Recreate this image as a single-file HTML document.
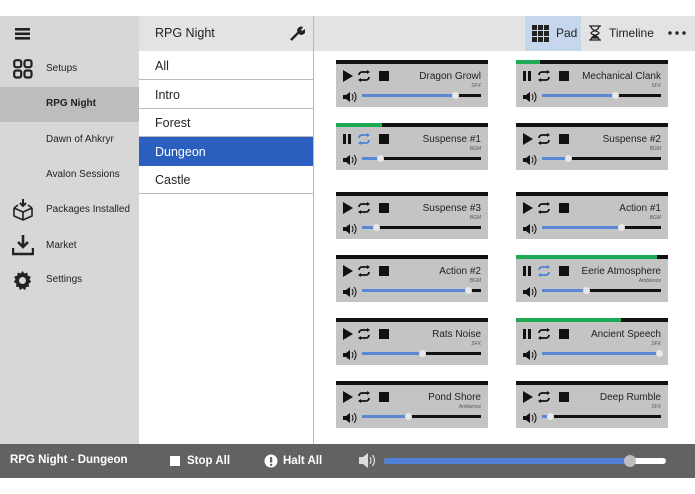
<!DOCTYPE html>
<html><head><meta charset="utf-8"><style>
*{margin:0;padding:0;box-sizing:border-box}
body{width:695px;height:494px;background:#fff;position:relative;overflow:hidden;font-family:"Liberation Sans",sans-serif;color:#222}
.a{position:absolute}
.side{left:0;top:16px;width:139px;height:428px;background:#d7d7d7}
.si{position:absolute;left:46px;font-size:10px;color:#222}
.mid{left:139px;top:16px;width:175px;height:428px;background:#fff;border-right:1px solid #bbb}
.mh{left:139px;top:16px;width:174px;height:35px;background:#e3e3e3}
.li{position:absolute;left:139px;width:174px;height:29px;border-bottom:1px solid #bbb;font-size:12.5px;padding:8px 0 0 16px}
.rh{left:314px;top:16px;width:381px;height:35px;background:#e3e3e3}
.card{position:absolute;width:152px;height:47px;background:#c4c4c4;border-top:4px solid #111}
.pg{position:absolute;top:-4px;left:0;height:4px;background:#1daa55}
.t{position:absolute;right:7px;top:7px;font-size:10px;color:#222;white-space:nowrap}
.s{position:absolute;right:7px;top:19px;font-size:5px;font-style:italic;color:#555}
.ic{position:absolute;left:6px;top:5px}
.vol{position:absolute;left:7px;top:28px}
.tr{position:absolute;left:26px;top:30px;width:119px;height:3px;background:#111}
.fl{position:absolute;left:0;top:0;height:3px;background:#5b87d6}
.th{position:absolute;top:-2px;width:7px;height:7px;border-radius:50%;background:#e8e8e8;margin-left:-3px}
.bb{left:0;top:444px;width:695px;height:34px;background:#626262;color:#fff;font-weight:bold;font-size:11.5px}
</style></head><body>
<div class="a side"></div>
<div class="a" style="left:0;top:87px;width:139px;height:35px;background:#bdbdbd"></div>
<svg class="a" style="left:15px;top:27px" width="15" height="13"><rect y="1" width="15" height="2.6" fill="#222"/><rect y="5.5" width="15" height="2.6" fill="#222"/><rect y="10" width="15" height="2.6" fill="#222"/></svg>
<svg class="a" style="left:13px;top:59px" width="20" height="20" fill="none" stroke="#222" stroke-width="2.2"><rect x="1.2" y="1.2" width="7" height="7" rx="2"/><rect x="11.5" y="1.2" width="7" height="7" rx="2"/><rect x="1.2" y="11.5" width="7" height="7" rx="2"/><rect x="11.5" y="11.5" width="7" height="7" rx="2"/></svg>
<div class="si" style="top:63px">Setups</div>
<div class="si" style="top:98px;font-weight:bold">RPG Night</div>
<div class="si" style="top:134px">Dawn of Ahkryr</div>
<div class="si" style="top:169px">Avalon Sessions</div>
<svg class="a" style="left:12px;top:198px" width="22" height="24" fill="none" stroke="#222" stroke-width="1.6"><path d="M11 1v7M8 5l3 3 3-3" stroke-width="2"/><path d="M2 10l9 4 9-4M2 10v8l9 4 9-4v-8M11 14v8M2 10l4-3M20 10l-4-3"/></svg>
<div class="si" style="top:204px">Packages Installed</div>
<svg class="a" style="left:12px;top:234px" width="22" height="22"><path d="M11 1v11M6 8l5 5 5-5" stroke="#222" stroke-width="2.6" fill="none"/><path d="M1 14v6h20v-6" stroke="#222" stroke-width="2.4" fill="none"/></svg>
<div class="si" style="top:240px">Market</div>
<svg class="a" style="left:12px;top:270px" width="21" height="21" viewBox="0 0 24 24"><path fill="#222" d="M12 1l2 3 3.5-1 .5 3.5 3.5 1-1.5 3.5 2 2.5-3 2 .5 3.5-3.5.5-1 3.5L12 21l-3 2-1-3.5L4.5 19l.5-3.5-3-2 2-2.5-1.5-3.5L6 6.5 6.5 3 10 4z"/><circle cx="12" cy="12" r="4" fill="#d7d7d7"/></svg>
<div class="si" style="top:274px">Settings</div>

<div class="a mid"></div>
<div class="a mh"></div>
<div class="a" style="left:155px;top:26px;font-size:12.5px">RPG Night</div>
<svg class="a" style="left:289px;top:25px" width="16" height="16"><path d="M2 15l8-8" stroke="#222" stroke-width="2.4"/><path d="M9 8a4 4 0 0 1 5-6l-2 3 1 1 3-2a4 4 0 0 1-6 5" fill="#222"/></svg>
<div class="li" style="top:51px">All</div>
<div class="li" style="top:80px">Intro</div>
<div class="li" style="top:108px">Forest</div>
<div class="li" style="top:137px;background:#2b5fbf;color:#fff;border-color:#2b5fbf">Dungeon</div>
<div class="li" style="top:165px">Castle</div>

<div class="a rh"></div>
<div class="a" style="left:525px;top:16px;width:56px;height:35px;background:#c6d6ec"></div>
<svg class="a" style="left:532px;top:25px" width="17" height="17" fill="#222"><rect x="0" y="0" width="5" height="5"/><rect x="6" y="0" width="5" height="5"/><rect x="12" y="0" width="5" height="5"/><rect x="0" y="6" width="5" height="5"/><rect x="6" y="6" width="5" height="5"/><rect x="12" y="6" width="5" height="5"/><rect x="0" y="12" width="5" height="5"/><rect x="6" y="12" width="5" height="5"/><rect x="12" y="12" width="5" height="5"/></svg>
<div class="a" style="left:556px;top:26px;font-size:12px">Pad</div>
<svg class="a" style="left:589px;top:25px" width="12" height="16" fill="none" stroke="#222" stroke-width="1.3"><path d="M0 1h12M0 15h12M2 1c0 5 8 5 8 7s-8 2-8 7M10 1c0 5-8 5-8 7s8 2 8 7"/><path d="M4 13l2-3 2 3z" fill="#222"/></svg>
<div class="a" style="left:609px;top:26px;font-size:12px">Timeline</div>
<svg class="a" style="left:668px;top:31px" width="18" height="4" fill="#222"><circle cx="2" cy="2" r="1.7"/><circle cx="9" cy="2" r="1.7"/><circle cx="16" cy="2" r="1.7"/></svg>

<!-- cards -->
<div class="card" style="left:336px;top:60px"><svg class="ic" width="48" height="14"><path d="M1 1l10 6-10 6z" fill="#111"/><path d="M17 6a3 3 0 0 1 3-3h6M27 8a3 3 0 0 1-3 3h-6" stroke="#111" stroke-width="1.8" fill="none"/><path d="M25 1l3 2-3 2zM19 9l-3 2 3 2z" fill="#111"/><rect x="37" y="2" width="10" height="10" fill="#111"/></svg><div class="t">Dragon Growl</div><div class="s">SFX</div><svg class="vol" width="14" height="10"><path d="M0 3h3l4-3v10l-4-3H0z" fill="#111"/><path d="M9 2q2 3 0 6M11 0q4 5 0 10" stroke="#111" fill="none"/></svg><div class="tr"><div class="fl" style="width:78%"></div><div class="th" style="left:78%"></div></div></div>

<div class="card" style="left:516px;top:60px"><div class="pg" style="width:16%"></div><svg class="ic" width="48" height="14"><rect x="1" y="2" width="3" height="10" fill="#111"/><rect x="6" y="2" width="3" height="10" fill="#111"/><path d="M17 6a3 3 0 0 1 3-3h6M27 8a3 3 0 0 1-3 3h-6" stroke="#111" stroke-width="1.8" fill="none"/><path d="M25 1l3 2-3 2zM19 9l-3 2 3 2z" fill="#111"/><rect x="37" y="2" width="10" height="10" fill="#111"/></svg><div class="t">Mechanical Clank</div><div class="s">SFX</div><svg class="vol" width="14" height="10"><path d="M0 3h3l4-3v10l-4-3H0z" fill="#111"/><path d="M9 2q2 3 0 6M11 0q4 5 0 10" stroke="#111" fill="none"/></svg><div class="tr"><div class="fl" style="width:61%"></div><div class="th" style="left:61%"></div></div></div>

<div class="card" style="left:336px;top:123px"><div class="pg" style="width:30%"></div><svg class="ic" width="48" height="14"><rect x="1" y="2" width="3" height="10" fill="#111"/><rect x="6" y="2" width="3" height="10" fill="#111"/><path d="M17 6a3 3 0 0 1 3-3h6M27 8a3 3 0 0 1-3 3h-6" stroke="#4a7fdc" stroke-width="1.8" fill="none"/><path d="M25 1l3 2-3 2zM19 9l-3 2 3 2z" fill="#4a7fdc"/><rect x="37" y="2" width="10" height="10" fill="#111"/></svg><div class="t">Suspense #1</div><div class="s">BGM</div><svg class="vol" width="14" height="10"><path d="M0 3h3l4-3v10l-4-3H0z" fill="#111"/><path d="M9 2q2 3 0 6M11 0q4 5 0 10" stroke="#111" fill="none"/></svg><div class="tr"><div class="fl" style="width:15%"></div><div class="th" style="left:15%"></div></div></div>

<div class="card" style="left:516px;top:123px"><svg class="ic" width="48" height="14"><path d="M1 1l10 6-10 6z" fill="#111"/><path d="M17 6a3 3 0 0 1 3-3h6M27 8a3 3 0 0 1-3 3h-6" stroke="#111" stroke-width="1.8" fill="none"/><path d="M25 1l3 2-3 2zM19 9l-3 2 3 2z" fill="#111"/><rect x="37" y="2" width="10" height="10" fill="#111"/></svg><div class="t">Suspense #2</div><div class="s">BGM</div><svg class="vol" width="14" height="10"><path d="M0 3h3l4-3v10l-4-3H0z" fill="#111"/><path d="M9 2q2 3 0 6M11 0q4 5 0 10" stroke="#111" fill="none"/></svg><div class="tr"><div class="fl" style="width:22%"></div><div class="th" style="left:22%"></div></div></div>

<div class="card" style="left:336px;top:192px"><svg class="ic" width="48" height="14"><path d="M1 1l10 6-10 6z" fill="#111"/><path d="M17 6a3 3 0 0 1 3-3h6M27 8a3 3 0 0 1-3 3h-6" stroke="#111" stroke-width="1.8" fill="none"/><path d="M25 1l3 2-3 2zM19 9l-3 2 3 2z" fill="#111"/><rect x="37" y="2" width="10" height="10" fill="#111"/></svg><div class="t">Suspense #3</div><div class="s">BGM</div><svg class="vol" width="14" height="10"><path d="M0 3h3l4-3v10l-4-3H0z" fill="#111"/><path d="M9 2q2 3 0 6M11 0q4 5 0 10" stroke="#111" fill="none"/></svg><div class="tr"><div class="fl" style="width:12%"></div><div class="th" style="left:12%"></div></div></div>

<div class="card" style="left:516px;top:192px"><svg class="ic" width="48" height="14"><path d="M1 1l10 6-10 6z" fill="#111"/><path d="M17 6a3 3 0 0 1 3-3h6M27 8a3 3 0 0 1-3 3h-6" stroke="#111" stroke-width="1.8" fill="none"/><path d="M25 1l3 2-3 2zM19 9l-3 2 3 2z" fill="#111"/><rect x="37" y="2" width="10" height="10" fill="#111"/></svg><div class="t">Action #1</div><div class="s">BGM</div><svg class="vol" width="14" height="10"><path d="M0 3h3l4-3v10l-4-3H0z" fill="#111"/><path d="M9 2q2 3 0 6M11 0q4 5 0 10" stroke="#111" fill="none"/></svg><div class="tr"><div class="fl" style="width:66%"></div><div class="th" style="left:66%"></div></div></div>

<div class="card" style="left:336px;top:255px"><svg class="ic" width="48" height="14"><path d="M1 1l10 6-10 6z" fill="#111"/><path d="M17 6a3 3 0 0 1 3-3h6M27 8a3 3 0 0 1-3 3h-6" stroke="#111" stroke-width="1.8" fill="none"/><path d="M25 1l3 2-3 2zM19 9l-3 2 3 2z" fill="#111"/><rect x="37" y="2" width="10" height="10" fill="#111"/></svg><div class="t">Action #2</div><div class="s">BGM</div><svg class="vol" width="14" height="10"><path d="M0 3h3l4-3v10l-4-3H0z" fill="#111"/><path d="M9 2q2 3 0 6M11 0q4 5 0 10" stroke="#111" fill="none"/></svg><div class="tr"><div class="fl" style="width:89%"></div><div class="th" style="left:89%"></div></div></div>

<div class="card" style="left:516px;top:255px"><div class="pg" style="width:93%"></div><svg class="ic" width="48" height="14"><rect x="1" y="2" width="3" height="10" fill="#111"/><rect x="6" y="2" width="3" height="10" fill="#111"/><path d="M17 6a3 3 0 0 1 3-3h6M27 8a3 3 0 0 1-3 3h-6" stroke="#4a7fdc" stroke-width="1.8" fill="none"/><path d="M25 1l3 2-3 2zM19 9l-3 2 3 2z" fill="#4a7fdc"/><rect x="37" y="2" width="10" height="10" fill="#111"/></svg><div class="t">Eerie Atmosphere</div><div class="s">Ambience</div><svg class="vol" width="14" height="10"><path d="M0 3h3l4-3v10l-4-3H0z" fill="#111"/><path d="M9 2q2 3 0 6M11 0q4 5 0 10" stroke="#111" fill="none"/></svg><div class="tr"><div class="fl" style="width:37%"></div><div class="th" style="left:37%"></div></div></div>

<div class="card" style="left:336px;top:318px"><svg class="ic" width="48" height="14"><path d="M1 1l10 6-10 6z" fill="#111"/><path d="M17 6a3 3 0 0 1 3-3h6M27 8a3 3 0 0 1-3 3h-6" stroke="#111" stroke-width="1.8" fill="none"/><path d="M25 1l3 2-3 2zM19 9l-3 2 3 2z" fill="#111"/><rect x="37" y="2" width="10" height="10" fill="#111"/></svg><div class="t">Rats Noise</div><div class="s">SFX</div><svg class="vol" width="14" height="10"><path d="M0 3h3l4-3v10l-4-3H0z" fill="#111"/><path d="M9 2q2 3 0 6M11 0q4 5 0 10" stroke="#111" fill="none"/></svg><div class="tr"><div class="fl" style="width:50%"></div><div class="th" style="left:50%"></div></div></div>

<div class="card" style="left:516px;top:318px"><div class="pg" style="width:69%"></div><svg class="ic" width="48" height="14"><rect x="1" y="2" width="3" height="10" fill="#111"/><rect x="6" y="2" width="3" height="10" fill="#111"/><path d="M17 6a3 3 0 0 1 3-3h6M27 8a3 3 0 0 1-3 3h-6" stroke="#111" stroke-width="1.8" fill="none"/><path d="M25 1l3 2-3 2zM19 9l-3 2 3 2z" fill="#111"/><rect x="37" y="2" width="10" height="10" fill="#111"/></svg><div class="t">Ancient Speech</div><div class="s">SFX</div><svg class="vol" width="14" height="10"><path d="M0 3h3l4-3v10l-4-3H0z" fill="#111"/><path d="M9 2q2 3 0 6M11 0q4 5 0 10" stroke="#111" fill="none"/></svg><div class="tr"><div class="fl" style="width:98%"></div><div class="th" style="left:98%"></div></div></div>

<div class="card" style="left:336px;top:381px"><svg class="ic" width="48" height="14"><path d="M1 1l10 6-10 6z" fill="#111"/><path d="M17 6a3 3 0 0 1 3-3h6M27 8a3 3 0 0 1-3 3h-6" stroke="#111" stroke-width="1.8" fill="none"/><path d="M25 1l3 2-3 2zM19 9l-3 2 3 2z" fill="#111"/><rect x="37" y="2" width="10" height="10" fill="#111"/></svg><div class="t">Pond Shore</div><div class="s">Ambience</div><svg class="vol" width="14" height="10"><path d="M0 3h3l4-3v10l-4-3H0z" fill="#111"/><path d="M9 2q2 3 0 6M11 0q4 5 0 10" stroke="#111" fill="none"/></svg><div class="tr"><div class="fl" style="width:39%"></div><div class="th" style="left:39%"></div></div></div>

<div class="card" style="left:516px;top:381px"><svg class="ic" width="48" height="14"><path d="M1 1l10 6-10 6z" fill="#111"/><path d="M17 6a3 3 0 0 1 3-3h6M27 8a3 3 0 0 1-3 3h-6" stroke="#111" stroke-width="1.8" fill="none"/><path d="M25 1l3 2-3 2zM19 9l-3 2 3 2z" fill="#111"/><rect x="37" y="2" width="10" height="10" fill="#111"/></svg><div class="t">Deep Rumble</div><div class="s">SFX</div><svg class="vol" width="14" height="10"><path d="M0 3h3l4-3v10l-4-3H0z" fill="#111"/><path d="M9 2q2 3 0 6M11 0q4 5 0 10" stroke="#111" fill="none"/></svg><div class="tr"><div class="fl" style="width:7%"></div><div class="th" style="left:7%"></div></div></div>

<!-- bottom bar -->
<div class="a bb">
<div class="a" style="left:10px;top:10px">RPG Night - Dungeon</div>
<div class="a" style="left:170px;top:12px;width:10px;height:10px;background:#fff"></div>
<div class="a" style="left:187px;top:11px">Stop All</div>
<svg class="a" style="left:264px;top:10px" width="14" height="14"><circle cx="7" cy="7" r="6.5" fill="#fff"/><rect x="6" y="3" width="2.2" height="5.5" fill="#626262"/><rect x="6" y="9.8" width="2.2" height="2" fill="#626262"/></svg>
<div class="a" style="left:283px;top:11px">Halt All</div>
<svg class="a" style="left:359px;top:9px" width="18" height="15"><path d="M0 4h4l5-4v15l-5-4H0z" fill="#ddd"/><path d="M11 4q2 3.5 0 7M13.5 2q4 5.5 0 11" stroke="#ddd" fill="none" stroke-width="1.2"/></svg>
<div class="a" style="left:384px;top:14px;width:282px;height:6px;background:#fff;border-radius:3px"><div class="a" style="left:0;top:0;width:246px;height:6px;background:#4f7fd6;border-radius:3px"></div><div class="a" style="left:240px;top:-3px;width:12px;height:12px;border-radius:50%;background:#bdbdbd"></div></div>
</div>
</body></html>
